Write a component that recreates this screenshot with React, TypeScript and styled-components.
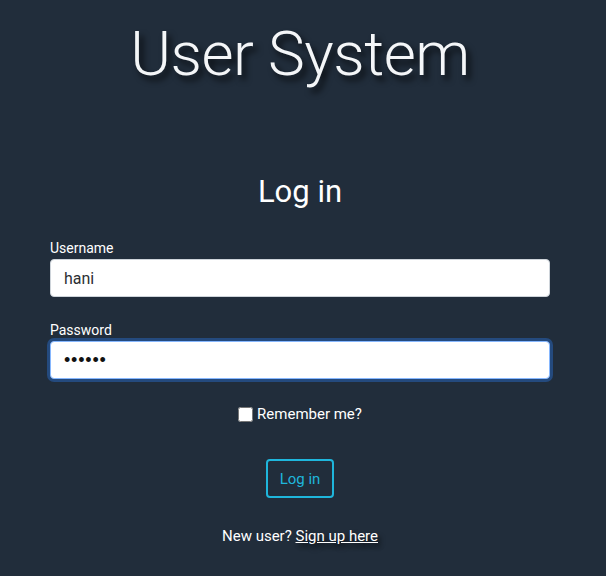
import React, { useState } from "react";
import styled, { createGlobalStyle } from "styled-components";

const GlobalStyle = createGlobalStyle`
  html, body {
    margin: 0;
    padding: 0;
    background-color: #212d3b;
  }

  body {
    font-family: "Roboto", "Open Sans", sans-serif;
    color: #ffffff;
  }
`;

const Page = styled.div`
  width: 600px;
  min-height: 576px;
  box-sizing: border-box;
  padding: 0 50px;
  display: flex;
  flex-direction: column;
  align-items: stretch;
`;

const Title = styled.h1`
  margin: 14px 0 0;
  text-align: center;
  font-size: 62px;
  font-weight: 300;
  line-height: 80px;
  letter-spacing: -0.5px;
  color: #f4f6f8;
  text-shadow: 4px 5px 6px rgba(0, 0, 0, 0.75);
`;

const Heading = styled.h2`
  margin: 78px 0 0;
  text-align: center;
  font-size: 31px;
  font-weight: 400;
  line-height: 40px;
  color: #ffffff;
`;

const LoginForm = styled.form`
  margin-top: 27px;
  display: flex;
  flex-direction: column;
`;

const Field = styled.div`
  display: flex;
  flex-direction: column;
  margin-bottom: 24px;
`;

const Label = styled.label`
  font-size: 14px;
  line-height: 18px;
  margin-bottom: 2px;
  color: #ffffff;
`;

const TextInput = styled.input<{ $focused?: boolean }>`
  box-sizing: border-box;
  height: 38px;
  width: 100%;
  padding: 0 13px;
  border-radius: 4px;
  border: 1px solid ${(p) => (p.$focused ? "#86b7fe" : "#ced4da")};
  background: #ffffff;
  font-family: "Roboto", "Open Sans", sans-serif;
  font-size: 16px;
  color: #2b2f33;
  outline: none;
  box-shadow: ${(p) => (p.$focused ? "0 0 0 3px #244a7e" : "none")};

  &[type="password"] {
    font-family: "Liberation Sans", sans-serif;
    font-size: 18px;
    letter-spacing: 0.8px;
    color: #111111;
  }
`;

const CheckRow = styled.label`
  display: flex;
  justify-content: center;
  align-items: center;
  gap: 4px;
  margin-top: 2px;
  font-size: 15px;
  color: #ffffff;

  input {
    width: 15px;
    height: 15px;
    margin: 0;
    border-radius: 3px;
  }
`;

const ButtonRow = styled.div`
  display: flex;
  justify-content: center;
  margin-top: 36px;
`;

const OutlineButton = styled.button`
  box-sizing: border-box;
  height: 39px;
  padding: 0 12px;
  border: 2px solid #1fb6dc;
  border-radius: 4px;
  background: transparent;
  color: #1fb6dc;
  font-family: "Roboto", "Open Sans", sans-serif;
  font-size: 15px;
  cursor: pointer;
`;

const Footer = styled.p`
  margin: 29px 0 0;
  text-align: center;
  font-size: 15px;
  color: #ffffff;

  a {
    color: #ffffff;
    text-decoration: underline;
    text-shadow: 3px 4px 5px rgba(0, 0, 0, 0.7);
  }
`;

const App = () => {
  const [username, setUsername] = useState("hani");
  const [password, setPassword] = useState("hani12");
  const [remember, setRemember] = useState(false);

  return (
    <>
      <GlobalStyle />
      <Page>
        <Title>User System</Title>
        <Heading>Log in</Heading>
        <LoginForm onSubmit={(e) => e.preventDefault()}>
          <Field>
            <Label htmlFor="username">Username</Label>
            <TextInput
              id="username"
              value={username}
              onChange={(e) => setUsername(e.target.value)}
            />
          </Field>
          <Field>
            <Label htmlFor="password">Password</Label>
            <TextInput
              id="password"
              type="password"
              $focused
              autoFocus
              value={password}
              onChange={(e) => setPassword(e.target.value)}
            />
          </Field>
          <CheckRow>
            <input
              type="checkbox"
              checked={remember}
              onChange={(e) => setRemember(e.target.checked)}
            />
            Remember me?
          </CheckRow>
          <ButtonRow>
            <OutlineButton type="submit">Log in</OutlineButton>
          </ButtonRow>
        </LoginForm>
        <Footer>
          New user? <a href="#">Sign up here</a>
        </Footer>
      </Page>
    </>
  );
};

export default App;
